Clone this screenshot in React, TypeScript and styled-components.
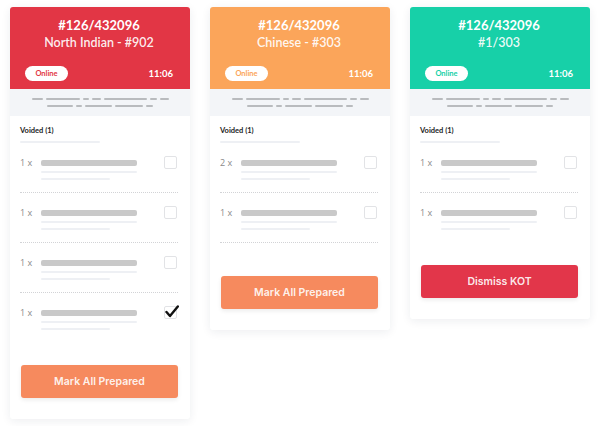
import styled, { createGlobalStyle } from "styled-components";

const GlobalStyle = createGlobalStyle`
  html, body {
    margin: 0;
    padding: 0;
    background: #ffffff;
  }
  body {
    font-family: "Lato", "Open Sans", sans-serif;
  }
`;

type KotItem = { qty: number; done?: boolean };
type Kot = {
  color: string;
  title: string;
  subtitle: string;
  items: KotItem[];
  trailingDivider?: boolean;
  action: string;
  actionColor: string;
};

const kots: Kot[] = [
  {
    color: "#e23645",
    title: "#126/432096",
    subtitle: "North Indian - #902",
    items: [{ qty: 1 }, { qty: 1 }, { qty: 1 }, { qty: 1, done: true }],
    action: "Mark All Prepared",
    actionColor: "#f68a5e",
  },
  {
    color: "#fba55a",
    title: "#126/432096",
    subtitle: "Chinese - #303",
    items: [{ qty: 2 }, { qty: 1 }],
    trailingDivider: true,
    action: "Mark All Prepared",
    actionColor: "#f68a5e",
  },
  {
    color: "#17d0a8",
    title: "#126/432096",
    subtitle: "#1/303",
    items: [{ qty: 1 }, { qty: 1 }],
    action: "Dismiss KOT",
    actionColor: "#e2364a",
  },
];

// widths of the placeholder "text" dashes in the grey note strip
const noteRows = [
  [11, 34, 6, 9, 43, 7, 9],
  [26, 6, 27, 28, 7],
];

const Board = styled.div`
  display: flex;
  align-items: flex-start;
  gap: 20px;
  padding: 7px 10px;
`;

const Card = styled.div`
  width: 180px;
  display: flex;
  flex-direction: column;
  background: #ffffff;
  border-radius: 3px;
  box-shadow: 0 2px 10px rgba(30, 40, 60, 0.08);
  overflow: hidden;
`;

const Header = styled.div<{ $bg: string }>`
  background: ${(p) => p.$bg};
  color: #ffffff;
  padding: 9px 17px 8px 15px;
  display: flex;
  flex-direction: column;
  align-items: stretch;
`;

const Title = styled.div`
  text-align: center;
  font-size: 13px;
  font-weight: 700;
  line-height: 19px;
`;

const Subtitle = styled.div`
  text-align: center;
  font-size: 12.5px;
  font-weight: 600;
  line-height: 16px;
  color: rgba(255, 255, 255, 0.92);
`;

const HeaderFoot = styled.div`
  margin-top: 15px;
  display: flex;
  align-items: center;
  justify-content: space-between;
`;

const Pill = styled.span<{ $fg: string }>`
  width: 43px;
  height: 15px;
  border-radius: 8px;
  background: #ffffff;
  color: ${(p) => p.$fg};
  font-size: 7.5px;
  font-weight: 700;
  display: flex;
  align-items: center;
  justify-content: center;
`;

const Time = styled.span`
  font-size: 9.5px;
  font-weight: 700;
`;

const NoteStrip = styled.div`
  background: #f3f5f8;
  height: 27px;
  display: flex;
  flex-direction: column;
  align-items: center;
  justify-content: center;
  gap: 5px;
`;

const NoteRow = styled.div`
  display: flex;
  gap: 3px;
`;

const Dash = styled.span`
  height: 2px;
  background: #b9bbbe;
  border-radius: 1px;
`;

const Body = styled.div`
  padding: 10px 12px 21px 10px;
  display: flex;
  flex-direction: column;
`;

const Voided = styled.div`
  font-size: 7.5px;
  font-weight: 700;
  color: #222;
  line-height: 10px;
`;

const SoftLine = styled.span<{ $w: number }>`
  display: block;
  width: ${(p) => p.$w}px;
  height: 2px;
  border-radius: 1px;
  background: #eef0f4;
`;

const VoidedLine = styled(SoftLine)`
  margin-top: 5px;
`;

const Item = styled.div<{ $divider: boolean }>`
  padding: 13px 0 12px;
  border-bottom: 1px dotted ${(p) => (p.$divider ? "#d2d3d6" : "transparent")};
  display: flex;
  flex-direction: column;
`;

const ItemRow = styled.div`
  display: flex;
  align-items: center;
  height: 13px;
`;

const Qty = styled.span`
  width: 21px;
  font-size: 9px;
  color: #8a8a8a;
  font-family: "Open Sans", sans-serif;
  font-weight: 400;
`;

const NameBar = styled.span`
  width: 96px;
  height: 6px;
  border-radius: 2px;
  background: #c9c9c9;
`;

const Check = styled.span`
  position: relative;
  margin-left: auto;
  margin-right: 1px;
  width: 13px;
  height: 13px;
  box-sizing: border-box;
  border: 1px solid #e2e3e6;
  border-radius: 2px;
`;

const Tick = styled.svg`
  position: absolute;
  left: 0;
  top: -2px;
`;

const ItemLines = styled.div`
  padding-left: 21px;
  margin-top: 2px;
  display: flex;
  flex-direction: column;
  gap: 5px;
`;

const ActionButton = styled.button<{ $bg: string; $extra: boolean }>`
  margin-top: ${(p) => (p.$extra ? 33 : 22)}px;
  margin-left: 1px;
  height: 33px;
  border: none;
  border-radius: 3px;
  background: ${(p) => p.$bg};
  color: rgba(255, 255, 255, 0.9);
  font-family: "Inter", sans-serif;
  font-size: 10.5px;
  font-weight: 600;
  box-shadow: 0 2px 4px rgba(0, 0, 0, 0.08);
  cursor: pointer;
`;

function KotCard({ kot }: { kot: Kot }) {
  return (
    <Card>
      <Header $bg={kot.color}>
        <Title>{kot.title}</Title>
        <Subtitle>{kot.subtitle}</Subtitle>
        <HeaderFoot>
          <Pill $fg={kot.color}>Online</Pill>
          <Time>11:06</Time>
        </HeaderFoot>
      </Header>
      <NoteStrip>
        {noteRows.map((row, i) => (
          <NoteRow key={i}>
            {row.map((w, j) => (
              <Dash key={j} style={{ width: w }} />
            ))}
          </NoteRow>
        ))}
      </NoteStrip>
      <Body>
        <Voided>Voided (1)</Voided>
        <VoidedLine $w={80} />
        {kot.items.map((item, idx) => (
          <Item
            key={idx}
            $divider={idx < kot.items.length - 1 || !!kot.trailingDivider}
          >
            <ItemRow>
              <Qty>{item.qty} x</Qty>
              <NameBar />
              <Check>
                {item.done && (
                  <Tick width="14" height="13" viewBox="0 0 14 13">
                    <path
                      d="M1.5 7 L5 11 L12.8 1.5"
                      fill="none"
                      stroke="#111"
                      strokeWidth="2.4"
                      strokeLinecap="round"
                      strokeLinejoin="round"
                    />
                  </Tick>
                )}
              </Check>
            </ItemRow>
            <ItemLines>
              <SoftLine $w={96} />
              <SoftLine $w={69} />
            </ItemLines>
          </Item>
        ))}
        <ActionButton $bg={kot.actionColor} $extra={!!kot.trailingDivider}>
          {kot.action}
        </ActionButton>
      </Body>
    </Card>
  );
}

export default function App() {
  return (
    <>
      <GlobalStyle />
      <Board>
        {kots.map((k, i) => (
          <KotCard key={i} kot={k} />
        ))}
      </Board>
    </>
  );
}
